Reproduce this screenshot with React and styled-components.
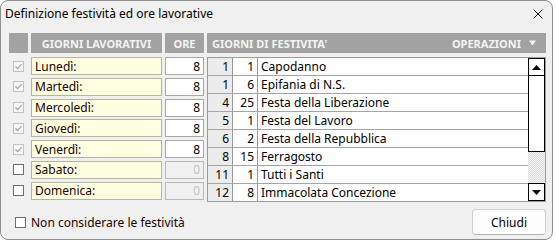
import React from 'react';
import styled, { createGlobalStyle } from 'styled-components';

const GlobalStyle = createGlobalStyle`
  body {
    margin: 0;
    background: #ffffff;
    font-family: 'Noto Sans', 'Open Sans', sans-serif;
  }
`;

const weekDays = [
  { name: 'Lunedì:', hours: 8, on: true },
  { name: 'Martedì:', hours: 8, on: true },
  { name: 'Mercoledì:', hours: 8, on: true },
  { name: 'Giovedì:', hours: 8, on: true },
  { name: 'Venerdì:', hours: 8, on: true },
  { name: 'Sabato:', hours: 0, on: false },
  { name: 'Domenica:', hours: 0, on: false },
];

const holidays = [
  [1, 1, 'Capodanno'],
  [1, 6, 'Epifania di N.S.'],
  [4, 25, 'Festa della Liberazione'],
  [5, 1, 'Festa del Lavoro'],
  [6, 2, 'Festa della Repubblica'],
  [8, 15, 'Ferragosto'],
  [11, 1, 'Tutti i Santi'],
  [12, 8, 'Immacolata Concezione'],
];

function CheckBox({ checked, disabled }) {
  return (
    <Box $disabled={disabled}>
      {checked && (
        <svg width="9" height="9" viewBox="0 0 9 9">
          <path d="M1.5 4.5 L3.6 6.6 L7.6 2.2" fill="none" stroke={disabled ? '#a2a2a2' : '#333'} strokeWidth="1.1" />
        </svg>
      )}
    </Box>
  );
}

export default function App() {
  return (
    <>
      <GlobalStyle />
      <Window>
        <TitleBar>
          <Title>Definizione festività ed ore lavorative</Title>
          <svg width="10" height="10" viewBox="0 0 10 10">
            <path d="M0.5 0.5 L9.5 9.5 M9.5 0.5 L0.5 9.5" stroke="#1a1a1a" strokeWidth="1" />
          </svg>
        </TitleBar>
        <Body>
          <Panels>
            <LeftPanel>
              <DayGrid>
                <HeaderCell />
                <HeaderCell>GIORNI LAVORATIVI</HeaderCell>
                <HeaderCell>ORE</HeaderCell>
              </DayGrid>
              <DayList>
                {weekDays.map((d) => (
                  <DayGrid key={d.name}>
                    <CheckCell>
                      <CheckBox checked={d.on} disabled={d.on} />
                    </CheckCell>
                    <DayLabel>{d.name}</DayLabel>
                    <HoursField $disabled={!d.on}>{d.hours}</HoursField>
                  </DayGrid>
                ))}
              </DayList>
            </LeftPanel>
            <RightPanel>
              <HeaderCell $split>
                <span>GIORNI DI FESTIVITA'</span>
                <Ops>
                  OPERAZIONI
                  <svg width="7" height="6" viewBox="0 0 7 6">
                    <path d="M0 0.5 H7 L3.5 5.5 Z" fill="#f2f2f2" />
                  </svg>
                </Ops>
              </HeaderCell>
              <Table>
                <Rows>
                  {holidays.map(([m, d, name], i) => (
                    <Row key={name} $last={i === holidays.length - 1}>
                      <NumCell $shaded>{m}</NumCell>
                      <NumCell>{d}</NumCell>
                      <TextCell>{name}</TextCell>
                    </Row>
                  ))}
                </Rows>
                <ScrollBar>
                  <ArrowButton>
                    <svg width="9" height="5" viewBox="0 0 9 5">
                      <path d="M0 5 H9 L4.5 0 Z" fill="#000" />
                    </svg>
                  </ArrowButton>
                  <Thumb />
                  <Track />
                  <ArrowButton>
                    <svg width="9" height="5" viewBox="0 0 9 5">
                      <path d="M0 0 H9 L4.5 5 Z" fill="#000" />
                    </svg>
                  </ArrowButton>
                </ScrollBar>
              </Table>
            </RightPanel>
          </Panels>
          <Footer>
            <FooterCheck>
              <CheckBox />
              <span>Non considerare le festività</span>
            </FooterCheck>
            <CloseButton type="button">Chiudi</CloseButton>
          </Footer>
        </Body>
      </Window>
    </>
  );
}

const Window = styled.div`
  width: 553px;
  height: 240px;
  box-sizing: border-box;
  border: 1px solid #8e8e8e;
  border-radius: 8px;
  background: #f0f0f0;
  overflow: hidden;
  display: flex;
  flex-direction: column;
`;

const TitleBar = styled.div`
  height: 25px;
  display: flex;
  align-items: center;
  justify-content: space-between;
  padding: 0 9px 0 4px;
`;

const Title = styled.span`
  font-size: 12px;
  color: #000;
`;

const Body = styled.div`
  padding: 7px 6px 0 8px;
`;

const Panels = styled.div`
  display: flex;
  gap: 3px;
`;

const LeftPanel = styled.div`
  display: flex;
  flex-direction: column;
`;

const DayGrid = styled.div`
  display: grid;
  grid-template-columns: 19px 131px 39px;
  column-gap: 3px;
`;

const DayList = styled.div`
  margin-top: 4px;
  display: flex;
  flex-direction: column;
  gap: 2.75px;
`;

const HeaderCell = styled.div`
  height: 20px;
  background: #a2a2a2;
  color: #f4f4f4;
  font-size: 11px;
  font-weight: 700;
  display: flex;
  align-items: center;
  justify-content: ${(p) => (p.$split ? 'space-between' : 'center')};
  padding: ${(p) => (p.$split ? '0 10px 0 5px' : '0')};
`;

const Ops = styled.span`
  display: flex;
  align-items: center;
  gap: 8px;
`;

const CheckCell = styled.div`
  display: flex;
  align-items: center;
  justify-content: center;
`;

const Box = styled.span`
  width: 11px;
  height: 11px;
  box-sizing: border-box;
  border: 1px solid ${(p) => (p.$disabled ? '#c2c2c2' : '#6f6f6f')};
  background: ${(p) => (p.$disabled ? '#f6f6f6' : '#ffffff')};
  display: inline-flex;
  align-items: center;
  justify-content: center;
`;

const Field = styled.div`
  height: 18px;
  box-sizing: border-box;
  font-size: 12px;
  display: flex;
  align-items: center;
  padding: 0 3px;
`;

const DayLabel = styled(Field)`
  background: #ffffe1;
  border: 1px solid #b4b4a0;
  color: #1a0000;
`;

const HoursField = styled(Field)`
  justify-content: flex-end;
  background: ${(p) => (p.$disabled ? '#f0f0f0' : '#ffffff')};
  border: 1px solid ${(p) => (p.$disabled ? '#b8b8b8' : '#a8a8a8')};
  color: ${(p) => (p.$disabled ? '#c4c4c4' : '#000')};
`;

const RightPanel = styled.div`
  flex: 1;
  display: flex;
  flex-direction: column;
`;

const Table = styled.div`
  margin-top: 4px;
  height: 145px;
  box-sizing: border-box;
  border: 1px solid #9a9a9a;
  background: #ffffff;
  display: flex;
`;

const Rows = styled.div`
  flex: 1;
  display: flex;
  flex-direction: column;
`;

const Row = styled.div`
  height: 18px;
  box-sizing: border-box;
  border-bottom: ${(p) => (p.$last ? 'none' : '1px solid #a6a6a6')};
  display: grid;
  grid-template-columns: 25px 25px 1fr;
  font-size: 12px;
  color: #000;
`;

const NumCell = styled.div`
  border-right: 1px solid #9a9a9a;
  background: ${(p) => (p.$shaded ? '#ececec' : '#ffffff')};
  color: #000;
  display: flex;
  align-items: center;
  justify-content: flex-end;
  padding-right: 3px;
`;

const TextCell = styled.div`
  display: flex;
  align-items: center;
  padding-left: 3px;
`;

const ScrollBar = styled.div`
  width: 17px;
  display: flex;
  flex-direction: column;
`;

const ArrowButton = styled.div`
  height: 18px;
  box-sizing: border-box;
  border: 1px solid #000;
  background: #ffffff;
  display: flex;
  align-items: center;
  justify-content: center;
`;

const Thumb = styled.div`
  height: 76px;
  box-sizing: border-box;
  border: 1px solid #000;
  border-top: none;
  background: #ffffff;
`;

const Track = styled.div`
  flex: 1;
  background: repeating-conic-gradient(#dcdcdc 0 25%, #f6f6f6 0 50%) 0 0 / 2px 2px;
`;

const Footer = styled.div`
  margin-top: 7px;
  display: flex;
  align-items: center;
  justify-content: space-between;
  padding-left: 6px;
`;

const FooterCheck = styled.label`
  display: flex;
  align-items: center;
  gap: 5px;
  font-size: 12px;
  color: #1a0000;
`;

const CloseButton = styled.button`
  width: 74px;
  height: 26px;
  box-sizing: border-box;
  background: #fdfdfd;
  border: 1px solid #d0d0d0;
  border-bottom-color: #b2b2b2;
  border-radius: 4px;
  font-family: inherit;
  font-size: 12px;
  color: #000;
  padding: 0;
`;
